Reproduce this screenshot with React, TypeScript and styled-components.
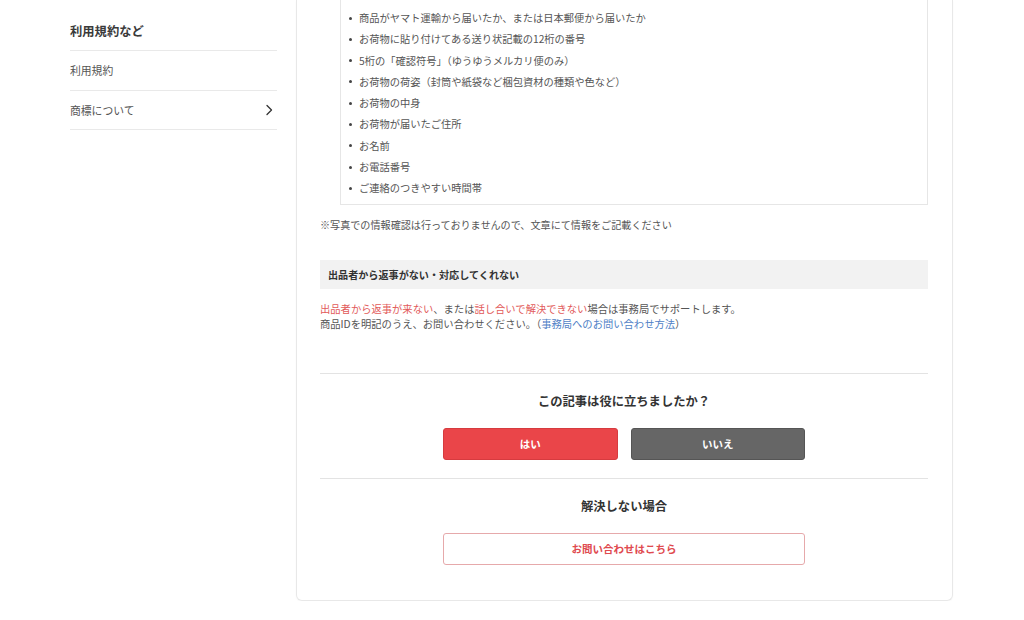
import styled, { createGlobalStyle } from 'styled-components';

const GlobalStyle = createGlobalStyle`
  html, body {
    margin: 0;
    padding: 0;
    background: #fff;
  }
  body {
    font-family: "Noto Sans CJK JP", "Noto Sans", "Liberation Sans", sans-serif;
    color: #333;
    -webkit-font-smoothing: antialiased;
  }
`;

const Layout = styled.div`
  display: flex;
  align-items: flex-start;
  gap: 19px;
  padding: 0 71px 0 70px;
`;

const Sidebar = styled.aside`
  width: 207px;
  flex-shrink: 0;
`;

const SideTitle = styled.h3`
  margin: 0;
  padding: 22px 0 10px;
  font-size: 12.3px;
  line-height: 18px;
  font-weight: 700;
  color: #3a3a3a;
  border-bottom: 1px solid #e9e9e9;
`;

const SideItem = styled.a`
  display: flex;
  align-items: center;
  justify-content: space-between;
  height: 38.5px;
  font-size: 10.8px;
  color: #555;
  text-decoration: none;
  border-bottom: 1px solid #e9e9e9;
`;

const Chevron = styled.svg`
  width: 14px;
  height: 14px;
  margin-right: 1px;
`;

const Card = styled.main`
  width: 657px;
  flex-shrink: 0;
  box-sizing: border-box;
  padding: 0 24px 35px 23px;
  border: 1px solid #e8e8e8;
  border-top: none;
  border-radius: 0 0 6px 6px;
  box-shadow: 0 1px 2px rgba(0, 0, 0, 0.03);
`;

const InfoBox = styled.ul`
  margin: 0 0 0 20px;
  padding: 7px 8px 5px;
  list-style: none;
  border: 1px solid #e6e6e6;
  border-top: none;
`;

const InfoItem = styled.li`
  position: relative;
  padding-left: 10px;
  font-size: 10.25px;
  line-height: 21.3px;
  color: #555;
  &::before {
    content: '';
    position: absolute;
    left: 0;
    top: 9.5px;
    width: 3px;
    height: 3px;
    border-radius: 50%;
    background: #444;
  }
`;

const Note = styled.p`
  margin: 12px 0 0;
  font-size: 10.1px;
  line-height: 16px;
  color: #555;
`;

const SectionHeading = styled.h4`
  margin: 27px 0 0;
  padding: 0 8px;
  height: 29px;
  display: flex;
  align-items: center;
  background: #f2f2f2;
  font-size: 10.1px;
  font-weight: 700;
  color: #333;
`;

const Body = styled.p`
  margin: 12px 0 0;
  font-size: 10.3px;
  line-height: 15.5px;
  color: #555;
`;

const Accent = styled.span`
  color: #e25a5a;
`;

const Link = styled.a`
  color: #4f7fc6;
  text-decoration: none;
`;

const Divider = styled.hr<{ $top: number }>`
  margin: ${p => p.$top}px 0 0;
  border: none;
  border-top: 1px solid #e3e3e3;
`;

const CenterTitle = styled.h2`
  margin: 18px 0 0;
  text-align: center;
  font-size: 12.3px;
  line-height: 18px;
  font-weight: 700;
  color: #333;
`;

const ButtonRow = styled.div`
  display: flex;
  justify-content: center;
  gap: 13px;
  margin-top: 18px;
`;

const Button = styled.button<{ $variant: 'yes' | 'no' | 'outline'; $wide?: boolean }>`
  width: ${p => (p.$wide ? '362px' : '174.5px')};
  height: 32px;
  box-sizing: border-box;
  border-radius: 3px;
  font-family: inherit;
  font-size: 10.5px;
  font-weight: 700;
  cursor: pointer;
  color: ${p => (p.$variant === 'outline' ? '#e04a4f' : '#fff')};
  background: ${p =>
    p.$variant === 'yes' ? '#ea4549' : p.$variant === 'no' ? '#666' : '#fff'};
  border: 1px solid
    ${p =>
      p.$variant === 'yes' ? '#d63b3f' : p.$variant === 'no' ? '#555' : '#e6a9ab'};
`;

const items = [
  '商品がヤマト運輸から届いたか、または日本郵便から届いたか',
  'お荷物に貼り付けてある送り状記載の12桁の番号',
  '5桁の「確認符号」（ゆうゆうメルカリ便のみ）',
  'お荷物の荷姿（封筒や紙袋など梱包資材の種類や色など）',
  'お荷物の中身',
  'お荷物が届いたご住所',
  'お名前',
  'お電話番号',
  'ご連絡のつきやすい時間帯',
];

export default function App() {
  return (
    <>
      <GlobalStyle />
      <Layout>
        <Sidebar>
          <SideTitle>利用規約など</SideTitle>
          <SideItem href="#">利用規約</SideItem>
          <SideItem href="#">
            商標について
            <Chevron viewBox="0 0 14 14" fill="none">
              <polyline
                points="5,2.5 9.5,7 5,11.5"
                stroke="#333"
                strokeWidth="1.3"
                strokeLinecap="round"
                strokeLinejoin="round"
              />
            </Chevron>
          </SideItem>
        </Sidebar>

        <Card>
          <InfoBox>
            {items.map(text => (
              <InfoItem key={text}>{text}</InfoItem>
            ))}
          </InfoBox>
          <Note>※写真での情報確認は行っておりませんので、文章にて情報をご記載ください</Note>

          <SectionHeading>出品者から返事がない・対応してくれない</SectionHeading>
          <Body>
            <Accent>出品者から返事が来ない</Accent>、または
            <Accent>話し合いで解決できない</Accent>場合は事務局でサポートします。
            <br />
            商品IDを明記のうえ、お問い合わせください。（
            <Link href="#">事務局へのお問い合わせ方法</Link>）
          </Body>

          <Divider $top={41} />
          <CenterTitle>この記事は役に立ちましたか？</CenterTitle>
          <ButtonRow>
            <Button $variant="yes">はい</Button>
            <Button $variant="no">いいえ</Button>
          </ButtonRow>

          <Divider $top={18} />
          <CenterTitle>解決しない場合</CenterTitle>
          <ButtonRow>
            <Button $variant="outline" $wide>
              お問い合わせはこちら
            </Button>
          </ButtonRow>
        </Card>
      </Layout>
    </>
  );
}
